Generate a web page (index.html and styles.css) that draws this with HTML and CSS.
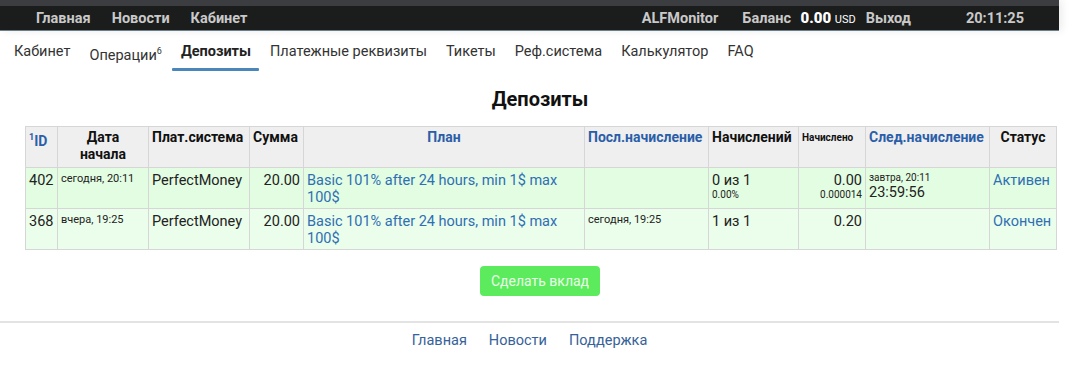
FILE: index.html
```html
<!doctype html>
<html>
<head>
<meta charset="utf-8">
<title>Депозиты</title>
<link rel="stylesheet" href="styles.css">
</head>
<body>
<div class="page">
	<div class="head">
		<div class="strip"></div>
		<div class="topbar">
			<div class="topnav">
				<a href="#">Главная</a>
				<a href="#">Новости</a>
				<a href="#">Кабинет</a>
			</div>
			<div class="topinfo">
				<span class="user">ALFMonitor</span>
				<span class="bal">Баланс <b>0.00</b> <small>USD</small></span>
				<a href="#">Выход</a>
				<span class="clock">20:11:25</span>
			</div>
		</div>
	</div>

	<ul class="tabs">
		<li><a href="#">Кабинет</a></li>
		<li class="low"><a href="#">Операции<sup>6</sup></a></li>
		<li class="active"><a href="#">Депозиты</a></li>
		<li><a href="#">Платежные реквизиты</a></li>
		<li><a href="#">Тикеты</a></li>
		<li><a href="#">Реф.система</a></li>
		<li><a href="#">Калькулятор</a></li>
		<li><a href="#">FAQ</a></li>
	</ul>

	<h1>Депозиты</h1>

	<table class="deps">
		<colgroup>
			<col style="width:32px"><col style="width:91px"><col style="width:101px"><col style="width:54px"><col style="width:281px">
			<col style="width:124px"><col style="width:90px"><col style="width:67px"><col style="width:124px"><col style="width:67px">
		</colgroup>
		<tr>
			<th class="l"><a href="#"><sup>1</sup>ID</a></th>
			<th>Дата<br>начала</th>
			<th class="l">Плат.система</th>
			<th class="l">Сумма</th>
			<th><a href="#">План</a></th>
			<th class="l"><a href="#">Посл.начисление</a></th>
			<th class="l">Начислений</th>
			<th class="l tiny">Начислено</th>
			<th class="l"><a href="#">След.начисление</a></th>
			<th>Статус</th>
		</tr>
		<tr class="odd">
			<td>402</td>
			<td class="sm">сегодня, 20:11</td>
			<td>PerfectMoney</td>
			<td class="r">20.00</td>
			<td><a href="#">Basic 101% after 24 hours, min 1$ max 100$</a></td>
			<td></td>
			<td>0 из 1<div class="xs">0.00%</div></td>
			<td class="r">0.00<div class="xs">0.000014</div></td>
			<td><div class="xs">завтра, 20:11</div>23:59:56</td>
			<td><a href="#">Активен</a></td>
		</tr>
		<tr class="even">
			<td>368</td>
			<td class="sm">вчера, 19:25</td>
			<td>PerfectMoney</td>
			<td class="r">20.00</td>
			<td><a href="#">Basic 101% after 24 hours, min 1$ max 100$</a></td>
			<td class="sm">сегодня, 19:25</td>
			<td>1 из 1</td>
			<td class="r">0.20</td>
			<td></td>
			<td><a href="#">Окончен</a></td>
		</tr>
	</table>

	<div class="act"><a href="#" class="btn">Сделать вклад</a></div>

	<div class="foot">
		<a href="#">Главная</a>
		<a href="#">Новости</a>
		<a href="#">Поддержка</a>
	</div>
</div>
</body>
</html>
```

FILE: styles.css
```css
*{ margin:0; padding:0; list-style:none;}
body{ background:#fff; font-family:Roboto, "Liberation Sans", sans-serif; color:#222;}
a{ text-decoration:none;}
.page{ width:1080px; height:370px; overflow:hidden;}

.head{ width:1059px; box-shadow:3px 0 8px rgba(0,0,0,0.08);}
.strip{ height:6px; background:#3b3d41;}
.topbar{ height:24px; background:#1b1c1c; border-bottom:1px solid #6a7f8c; display:flex; justify-content:space-between; align-items:center; padding:0 35px 0 36px; font-size:14.5px; font-weight:bold; color:#c9c9c9;}
.topbar a{ color:#c9c9c9;}
.topnav{ display:flex; gap:21px;}
.topinfo{ display:flex; align-items:center;}
.topinfo .user{ margin-right:24px;}
.topinfo .bal b{ color:#fff; margin-left:6px; font-size:15px;}
.topinfo .bal small{ font-size:11px; font-weight:normal; color:#fff;}
.topinfo .bal{ margin-right:10px;}
.topinfo .clock{ margin-left:55px;}

.tabs{ display:flex; gap:19px; padding:12px 0 0 14px; height:27px; font-size:14.5px;}
.tabs li{ position:relative;}
.tabs a{ color:#333;}
.tabs li.low{ padding-top:3px;}
.tabs sup{ font-size:9px;}
.tabs li.active a{ font-weight:bold; color:#222;}
.tabs li.active:after{ content:''; position:absolute; left:-9px; right:-8px; bottom:-1px; height:3px; background:#4a86b8; border-radius:1px;}

h1{ text-align:center; font-size:20px; font-weight:bold; margin:17px 0 15px; color:#111;}

.deps{ margin-left:25px; width:1031px; border-collapse:collapse; table-layout:fixed; font-size:14.5px;}
.deps th,.deps td{ border:1px solid #d6d6d6; vertical-align:top; padding:2px 3px; line-height:17px;}
.deps th{ background:#efefef; height:36px; font-size:14px; font-weight:bold; text-align:center; color:#111;}
.deps th.l{ text-align:left;}
.deps th.tiny{ font-size:10px;}
.deps th a{ color:#2b5ea8;}
.deps th sup{ font-size:9px;}
.deps td{ height:33px; padding-top:4px;}
.deps tr.odd td{ background:#e2fde2;}
.deps tr.even td{ background:#ebfdeb;}
.deps td.r{ text-align:right;}
.deps td.sm{ font-size:11px; line-height:13px;}
.deps td a{ color:#2f6fb3;}
.deps .xs{ font-size:10px; line-height:12px;}

.act{ text-align:center; padding-top:16px; height:55px;}
.btn{ display:inline-block; width:120px; height:30px; line-height:30px; background:#5ceb5c; color:#eaffea; font-size:14px; border-radius:4px;}

.foot{ width:1059px; border-top:2px solid #e3e3e3; display:flex; justify-content:center; gap:22px; padding-top:9px; font-size:14.5px;}
.foot a{ color:#36629a;}
```
